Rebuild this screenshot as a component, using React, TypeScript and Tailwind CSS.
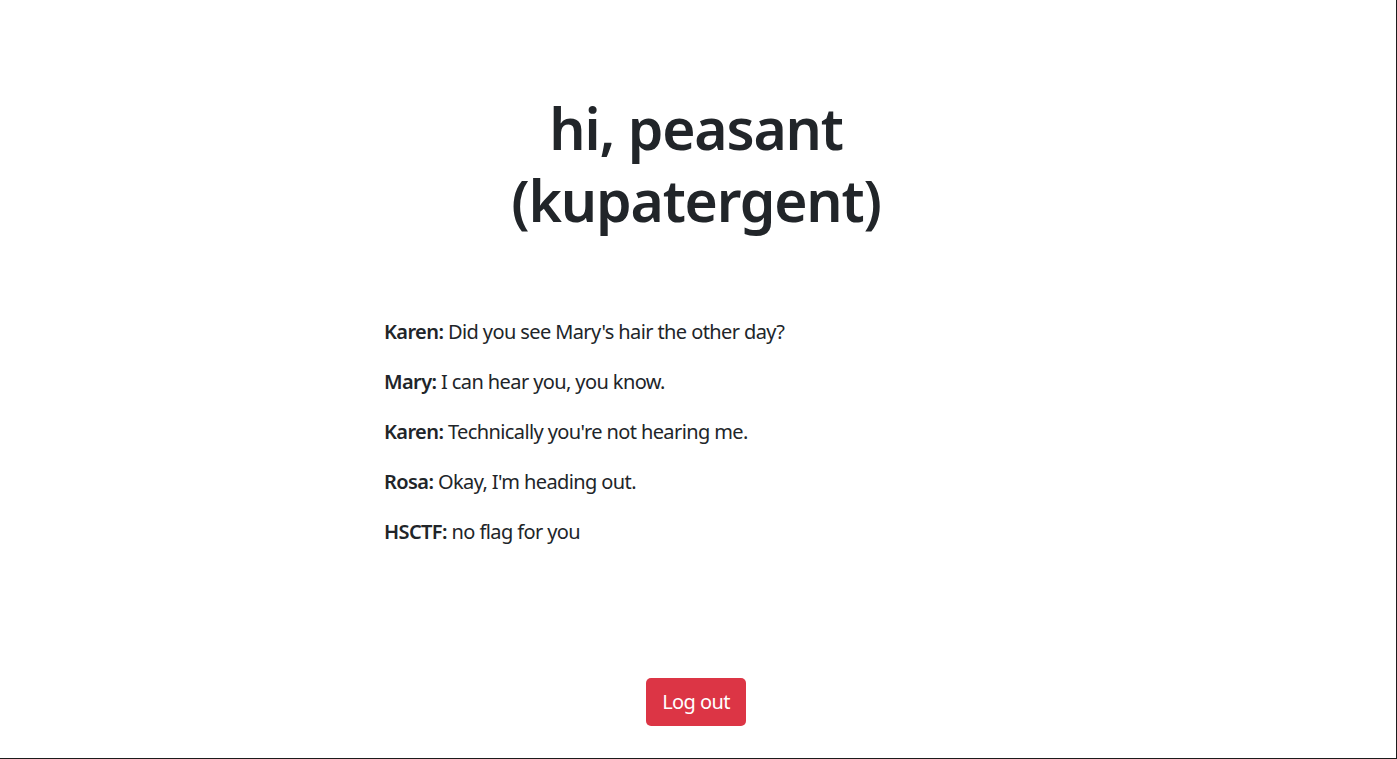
import React from "react";

const lines = [
  { who: "Karen", text: "Did you see Mary's hair the other day?" },
  { who: "Mary", text: "I can hear you, you know." },
  { who: "Karen", text: "Technically you're not hearing me." },
  { who: "Rosa", text: "Okay, I'm heading out." },
  { who: "HSCTF", text: "no flag for you" },
];

export default function App() {
  return (
    <div
      className="h-[759px] w-full pr-[4px] bg-white text-[#212529] border-r border-b border-[#1c1c1c] flex flex-col items-center"
      style={{ fontFamily: '"Noto Sans", "Open Sans", sans-serif' }}
    >
      <h1 className="pt-[92px] text-center text-[57px] leading-[72px] font-semibold tracking-[-1.2px]">
        hi, peasant
        <br />
        (kupatergent)
      </h1>

      <div className="mt-[81px] w-[624px] flex flex-col gap-[20px] text-[20px] leading-[30px] tracking-[-0.6px]">
        {lines.map((l, i) => (
          <p key={i}>
            <b className="font-semibold">{l.who}:</b> {l.text}
          </p>
        ))}
      </div>

      <button className="mt-[131px] h-[48px] px-4 rounded-[5px] bg-[#dc3545] text-white text-[20px] leading-[30px] tracking-[-0.6px]">
        Log out
      </button>
    </div>
  );
}
